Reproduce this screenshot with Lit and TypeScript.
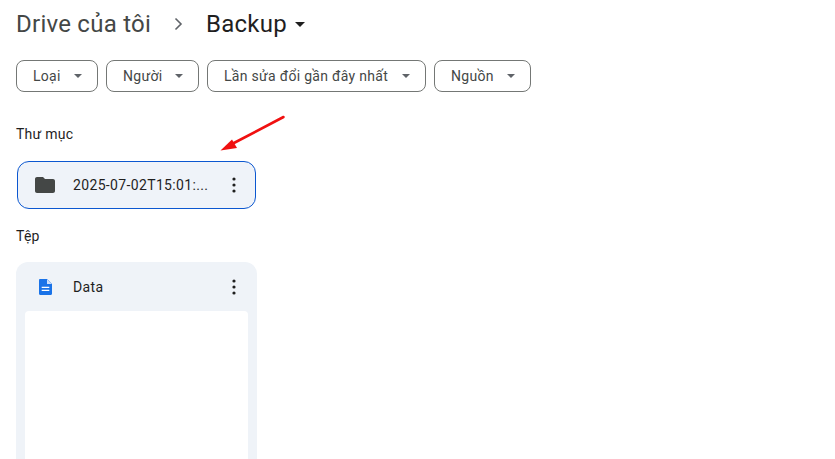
import { LitElement, html, css, svg } from "lit";
import { customElement } from "lit/decorators.js";

const dots = html`<svg class="dots" width="24" height="24" viewBox="0 0 24 24" fill="#1f1f1f"><circle cx="12" cy="6" r="1.6"/><circle cx="12" cy="12" r="1.6"/><circle cx="12" cy="18" r="1.6"/></svg>`;

@customElement("app-root")
export class AppRoot extends LitElement {
  static styles = css`
    :host { display: block; position: relative; height: 459px; overflow: hidden; background: #fff; font-family: Roboto, "Liberation Sans", sans-serif; color: #1f1f1f; }
    .crumbs { display: flex; align-items: center; height: 48px; padding-left: 16px; font-size: 24px; letter-spacing: .25px; }
    .parent { color: #444746; width: 134px; white-space: nowrap; }
    .sep { margin: 0 20px 0 20px; display: block; }
    .sep-wrap { display: block; }
    .current { white-space: nowrap; width: 80px; }
    .caret { margin-left: 9px; display: block; }
    .chips { display: flex; gap: 8px; padding: 12px 0 0 16px; }
    .chip { box-sizing: border-box; height: 32px; display: flex; align-items: center; justify-content: space-between; border: 1px solid #747775; border-radius: 8px; font-size: 14px; letter-spacing: .3px; color: #444746; white-space: nowrap; padding: 0 15px 0 16px; }
    .chip svg { display: block; }
    .label { font-size: 14px; line-height: 20px; font-weight: 450; letter-spacing: .25px; margin: 0; padding-left: 16px; }
    .l1 { padding-top: 32px; }
    .l2 { padding-top: 17px; }
    .folder { box-sizing: border-box; width: 239px; height: 48px; margin: 17px 0 0 17px; background: #eff3f9; border: 1px solid #0b57d0; border-radius: 12px; display: flex; align-items: center; padding: 0 9px 0 15px; }
    .name { font-size: 14px; font-weight: 450; letter-spacing: .35px; flex: 1; min-width: 0; white-space: nowrap; overflow: hidden; }
    .icon { width: 24px; margin-right: 16px; display: block; flex: none; }
    .file { box-sizing: border-box; width: 241px; height: 220px; margin: 16px 0 0 16px; background: #eff3f8; border-radius: 12px 12px 0 0; padding: 0 9px; display: flex; flex-direction: column; }
    .file-head { display: flex; align-items: center; height: 49px; flex: none; padding-right: 2px; }
    .file-head .icon { margin-left: 8px; }
    .preview { flex: 1; background: #fff; border-radius: 4px 4px 0 0; }
    .arrow { position: absolute; left: 215px; top: 110px; }
  `;
  render() {
    const caret = svg`<path d="M0 0h10L5 5z"/>`;
    const chip = (t: string, w: number) => html`<div class="chip" style="width:${w}px"><span>${t}</span><svg width="8" height="4" viewBox="0 0 10 5" fill="#5f6368">${caret}</svg></div>`;
    return html`
      <div class="crumbs">
        <span class="parent">Drive của tôi</span>
        <svg class="sep" width="16" height="16" viewBox="0 0 16 16" fill="none" stroke="#5f6368" stroke-width="1.6"><path d="M5.500 2.500l5.500 5.500-5.500 5.500"/></svg>
        <span class="current">Backup</span>
        <svg class="caret" width="10" height="5" viewBox="0 0 10 5" fill="#1f1f1f">${caret}</svg>
      </div>
      <div class="chips">
        ${chip("Loại", 82)}${chip("Người", 93)}${chip("Lần sửa đổi gần đây nhất", 219)}${chip("Nguồn", 97)}
      </div>
      <p class="label l1">Thư mục</p>
      <div class="folder">
        <svg class="icon" width="24" height="24" viewBox="0 0 24 24" fill="#444746"><path d="M10 4H4c-1.100 0-2 .9-2 2v12c0 1.100.9 2 2 2h16c1.100 0 2-.9 2-2V8c0-1.100-.9-2-2-2h-8l-2-2z"/></svg>
        <span class="name">2025-07-02T15:01:...</span>
        ${dots}
      </div>
      <p class="label l2">Tệp</p>
      <div class="file">
        <div class="file-head">
          <svg class="icon" width="24" height="24" viewBox="0 0 24 24"><path fill="#1a73e8" d="M7.200 4H14l5 5v9.800c0 .7-.5 1.200-1.200 1.200H7.200C6.500 20 6 19.500 6 18.800V5.200C6 4.500 6.500 4 7.200 4z"/><path fill="#cfe0fb" d="M14 4.300L18.700 9H14z"/><path fill="#fff" d="M8.700 11.700h7.600v1.400H8.700zM8.700 14.700h7.600v1.400H8.700z"/></svg>
          <span class="name">Data</span>
          ${dots}
        </div>
        <div class="preview"></div>
      </div>
      <svg class="arrow" width="75" height="45" viewBox="0 0 75 45"><path d="M68.500 7L17 34" stroke="#f01010" stroke-width="2.600" stroke-linecap="round"/><path d="M5.500 40.500L17 29.500l5 8.500z" fill="#f01010"/></svg>
    `;
  }
}
